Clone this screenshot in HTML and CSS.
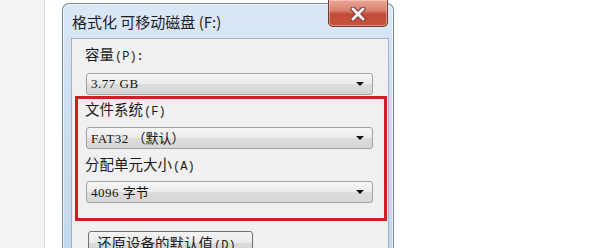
FILE: index.html
```html
<!DOCTYPE html>
<html lang="zh-CN">
<head>
<meta charset="utf-8">
<title>格式化 可移动磁盘 (F:)</title>
<link rel="stylesheet" href="styles.css">
</head>
<body>
<div class="sidebar"></div>
<div class="stage">
  <div class="window">
    <div class="titlebar">
      <span class="title">格式化 可移动磁盘 (F:)</span>
      <div class="close">
        <svg width="22" height="14" viewBox="0 0 22 14">
          <path d="M6 2 L16 12 M16 2 L6 12" stroke="#7a3a30" stroke-width="5" stroke-linecap="round"/>
          <path d="M6 2 L16 12 M16 2 L6 12" stroke="#f4f0f0" stroke-width="3" stroke-linecap="round"/>
        </svg>
      </div>
    </div>
    <div class="panel">
      <div class="label first">容量<span class="key">(P):</span></div>
      <div class="combo"><span class="val">3.77 GB</span><span class="arrow"></span></div>
      <div class="highlight">
        <div class="label top">文件系统<span class="key">(F)</span></div>
        <div class="combo c2"><span class="val">FAT32 <span class="cjk">（默认）</span></span><span class="arrow"></span></div>
        <div class="label mid">分配单元大小<span class="key">(A)</span></div>
        <div class="combo c3"><span class="val">4096 <span class="cjk">字节</span></span><span class="arrow"></span></div>
      </div>
      <div class="button">还原设备的默认值<span class="key">(D)</span></div>
    </div>
  </div>
</div>
</body>
</html>
```

FILE: styles.css
```css
html, body {
  margin: 0;
  padding: 0;
}
body {
  width: 596px;
  height: 248px;
  overflow: hidden;
  background: #ffffff;
  display: flex;
  font-family: "Noto Sans CJK SC", "Noto Sans", sans-serif;
  color: #1a1a1a;
}
.sidebar {
  width: 44px;
  flex: none;
  background: #f3f3f3;
  border-right: 1px solid #dadada;
}
.stage {
  flex: 1;
  padding-left: 17px;
  padding-top: 3px;
}
.window {
  position: relative;
  width: 330px;
  height: 260px;
  border: 1px solid #7b8794;
  border-bottom: none;
  border-radius: 7px 7px 0 0;
  background: linear-gradient(180deg, #dbe8f6 0%, #cfe0f2 30%, #c2d8ee 100%);
  box-shadow: inset 0 0 0 1px rgba(255,255,255,0.6);
}
.titlebar {
  height: 34px;
  display: flex;
  align-items: center;
  padding-left: 9px;
}
.title {
  font-size: 15px;
  line-height: 18px;
  color: #1e1e1e;
  margin-top: 1px;
}
.close {
  position: absolute;
  top: -4px;
  right: 5px;
  width: 60px;
  height: 27px;
  border: 1px solid #6b3a32;
  border-top: none;
  border-radius: 0 0 5px 5px;
  background: linear-gradient(180deg, #e9a898 0%, #d9806f 40%, #c24a36 55%, #c8553e 100%);
  box-shadow: inset 0 0 0 1px rgba(255,210,200,0.5);
  display: flex;
  align-items: center;
  justify-content: center;
  box-sizing: border-box;
}
.close svg {
  display: block;
  margin-top: 2px;
}
.panel {
  margin: 0 4px 0 8px;
  height: 240px;
  background: #f0f0f0;
  border: 1px solid #a3b3c4;
  border-bottom: none;
  padding-left: 13px;
  box-sizing: border-box;
}
.label {
  font-size: 14.5px;
  line-height: 20px;
  height: 20px;
  color: #1a1a1a;
}
.label.first {
  margin-top: 5px;
}
.key {
  font-family: "Liberation Mono", "Noto Sans CJK SC", monospace;
  font-size: 12px;
  margin-left: 1px;
}
.combo {
  width: 287px;
  height: 22px;
  margin-top: 9px;
  margin-left: 1px;
  box-sizing: border-box;
  border: 1px solid #a2a2a2;
  border-radius: 3px;
  background: linear-gradient(180deg, #f6f6f6 0%, #ebebeb 48%, #dddddd 52%, #d6d6d6 100%);
  display: flex;
  align-items: center;
  justify-content: space-between;
  padding: 0 8px 0 4px;
}
.val {
  font-family: "Liberation Serif", "Noto Sans CJK SC", serif;
  font-size: 13px;
  line-height: 16px;
  letter-spacing: 0.5px;
  color: #111;
}
.cjk {
  font-family: "Noto Sans CJK SC", sans-serif;
  font-size: 13px;
  letter-spacing: 0;
}
.arrow {
  width: 0;
  height: 0;
  border-left: 4px solid transparent;
  border-right: 4px solid transparent;
  border-top: 4px solid #111;
}
.highlight {
  margin-left: -10px;
  margin-top: 1px;
  width: 299px;
  border: 3px solid #cf1f25;
  padding: 0 0 15px 7px;
}
.label.top {
  margin-top: 0;
}
.combo.c2 {
  margin-top: 8px;
}
.label.mid {
  margin-top: 5px;
}
.combo.c3 {
  margin-top: 7px;
}
.button {
  margin-top: 10px;
  margin-left: 3px;
  width: 165px;
  height: 24px;
  box-sizing: border-box;
  border: 1px solid #707070;
  border-radius: 3px;
  background: linear-gradient(180deg, #f4f4f4 0%, #eaeaea 48%, #dcdcdc 52%, #d0d0d0 100%);
  font-size: 14.5px;
  line-height: 22px;
  padding-left: 8px;
  color: #1a1a1a;
}
```
